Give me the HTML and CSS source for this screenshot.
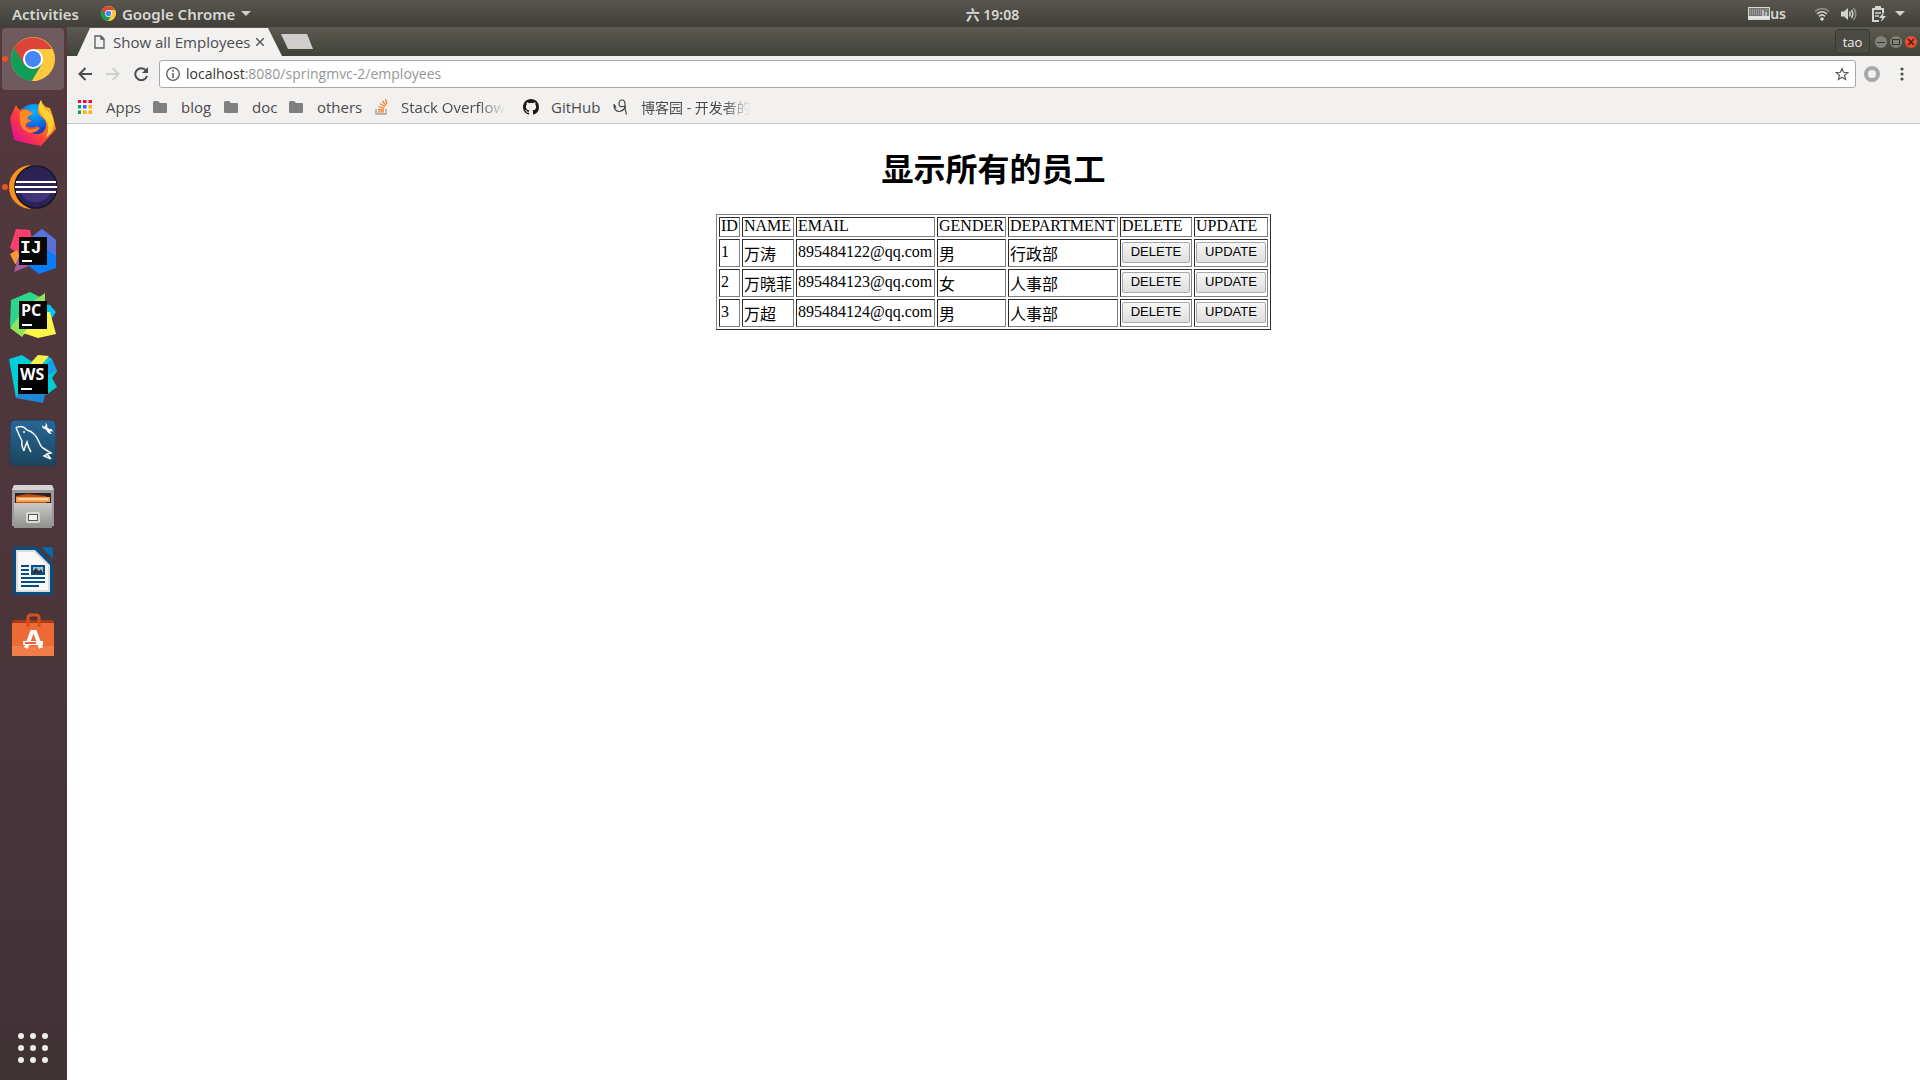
FILE: index.html
```html
<!DOCTYPE html>
<html lang="zh-CN">
<head>
<meta charset="utf-8">
<title>Show all Employees</title>
<link rel="stylesheet" href="styles.css">
</head>
<body>
<svg class="defs" width="0" height="0" aria-hidden="true">
  <symbol id="chrome" viewBox="0 0 44 44">
    <circle cx="22" cy="22" r="22" fill="#fdca3e"/>
    <path d="M3 11A22 22 0 0 0 21 44L31 27 22 22z" fill="#109d58"/>
    <path d="M3 11A22 22 0 0 1 41 12L22 12 13 27z" fill="#dc4437"/>
    <path d="M22 12H41A22 22 0 0 1 21 44L31 27z" fill="#fdca3e"/>
    <circle cx="22" cy="22" r="10" fill="#fff"/>
    <circle cx="22" cy="22" r="8" fill="#4486f4"/>
  </symbol>
  <symbol id="folder" viewBox="0 0 14 12">
    <path d="M0 1.500Q0 0 1.500 0H5L7 2H13Q14 2 14 3V11Q14 12 13 12H1Q0 12 0 11z" fill="#808080"/>
  </symbol>
</svg>

<header class="topbar">
  <div class="topbar-left">
    <button class="top-btn activities">Activities</button>
    <button class="top-btn app-menu"><svg width="15" height="15"><use href="#chrome"/></svg>Google Chrome<svg width="10" height="5" viewBox="0 0 10 5"><path d="M0 0H10L5 5z" fill="#d0d0cc"/></svg></button>
  </div>
  <time class="clock">六 19:08</time>
  <div class="tray">
    <span class="input-source"><svg width="22" height="13" viewBox="0 0 22 13"><rect x=".5" y=".5" width="21" height="12" fill="#777" stroke="#d8d8d4"/><path d="M2 3H14M2 5H14M2 7H14" stroke="#bbb" stroke-dasharray="1 1"/><path d="M1 10.500H21" stroke="#e4e4e4" stroke-width="3"/><path d="M15 3V9M18 5V9" stroke="#fff"/><path d="M17 2.500H20" stroke="#7db65c"/></svg>us</span>
    <svg class="wifi" width="16" height="14" viewBox="0 0 16 14" fill="none" stroke="#d4d4d0" stroke-width="1.600"><path d="M1 4.500Q8-1.500 15 4.500" opacity=".5"/><path d="M3 7Q8 2.500 13 7"/><path d="M5 9.300Q8 6.500 11 9.300"/><circle cx="8" cy="12" r="1.300" fill="#d4d4d0" stroke-width="1"/></svg>
    <svg class="volume" width="16" height="14" viewBox="0 0 16 14" fill="none" stroke="#d4d4d0" stroke-width="1.500"><path d="M0 4.500H3L7 1V13L3 9.500H0z" fill="#d4d4d0" stroke="none"/><path d="M8.500 4.500Q10 7 8.500 9.500M10.500 3Q13 7 10.500 11"/><path d="M12.500 1Q17 7 12.500 13" opacity=".5"/></svg>
    <svg class="battery" width="15" height="16" viewBox="0 0 15 16"><path d="M4 2V1H8V2" stroke="#d4d4d0" stroke-width="2" fill="none"/><path d="M11 7V3H1V15H7" stroke="#d4d4d0" stroke-width="2" fill="none"/><path d="M3 7H9M3 10H7" stroke="#d4d4d0" stroke-width="1.500"/><path d="M12 6 7 12H10L9 16 14 10H11z" fill="#d4d4d0"/></svg>
    <svg width="10" height="5" viewBox="0 0 10 5"><path d="M0 0H10L5 5z" fill="#d0d0cc"/></svg>
  </div>
</header>

<div class="desktop">
  <nav class="dock" aria-label="Dock">
    <a class="app active running" href="#" aria-label="Google Chrome"><svg width="44" height="44"><use href="#chrome"/></svg></a>
    <a class="app" href="#" aria-label="Firefox"><svg width="46" height="46" viewBox="0 0 46 46">
      <defs><linearGradient id="fx" x1="0" y1="1" x2="1" y2="0"><stop offset=".15" stop-color="#e3168a"/><stop offset=".4" stop-color="#ff3b3f"/><stop offset=".7" stop-color="#ff8a1c"/><stop offset="1" stop-color="#ffe23a"/></linearGradient><radialGradient id="fb" cx=".5" cy=".2" r=".8"><stop offset="0" stop-color="#08b6ff"/><stop offset=".6" stop-color="#0a5bd8"/><stop offset="1" stop-color="#26127a"/></radialGradient></defs>
      <circle cx="24" cy="22" r="18" fill="url(#fb)"/>
      <path d="M6 5 9 10Q15 8 18 10L23 13Q20 15 17 17 18 20 22 20 20 22 16 24 18 29 25 27 27 25 30 28 26 34 20 31 26 37 33 32 38 27 35 20 32 17 30 16 25 10 31 0 33 7 40 8 44 18 46 29 39 37 31 46 18 44 4 40 1 26 0 18 5 12z" fill="url(#fx)"/>
      <path d="M10 12Q15 9 18 11L23 14Q18 15 17 19L21 21Q16 22 15 26 17 31 24 29L29 28Q25 34 18 32 10 29 10 20z" fill="#ff8a26"/>
      <path d="M31 0Q32 7 38 11 46 18 43 29 40 35 36 37 41 27 35 19 25 10 31 0z" fill="#ffda35" opacity=".85"/>
    </svg></a>
    <a class="app running" href="#" aria-label="Eclipse"><svg width="48" height="46" viewBox="0 0 48 46">
      <path d="M22 1A22 22 0 0 0 22 45Q8 38 8 23 8 8 22 1z" fill="#f7941e"/><circle cx="27" cy="23" r="21" fill="#2c2255" stroke="#17152a" stroke-width="1.500"/><path d="M11 26Q14 38 27 38 39 38 43 26z" fill="#41337b"/><path d="M7 18H47M6 23H48M7 28H47" stroke="#fff" stroke-width="2"/>
    </svg></a>
    <a class="app" href="#" aria-label="IntelliJ IDEA"><svg width="46" height="46" viewBox="0 0 46 46">
      <path d="M6 1 20 2 24 20 12 28 0 20z" fill="#fe3d6e"/><path d="M0 26 7 22 12 32 5 36z" fill="#f79a31"/><path d="M4 44 8 29 24 36z" fill="#a65a9d"/><path d="M20 10 32 1 46 12V40L29 46 16 36z" fill="#087cfa"/><path d="M20 10 32 1 46 12V28z" fill="#5872d8"/><rect x="9" y="9" width="28" height="28" fill="#080808"/><path d="M12 33H22" stroke="#fff" stroke-width="2"/><text class="logo-text mono" x="10" y="25">IJ</text>
    </svg></a>
    <a class="app" href="#" aria-label="PyCharm"><svg width="46" height="46" viewBox="0 0 46 46">
      <path d="M1 8 20 0 32 6 25 36 10 40 0 34z" fill="#2bd68c"/><path d="M18 13 35 1V14L12 45 0 36z" fill="#8ee55a"/><path d="M33 12 40 13 46 20 37 33z" fill="#07c3f2"/><path d="M37 20H40L46 42 28 46 13 41z" fill="#fcf84a"/><rect x="9" y="9" width="28" height="28" fill="#080808"/><path d="M12 33H22" stroke="#fff" stroke-width="2"/><text class="logo-text" x="11" y="24">PC</text>
    </svg></a>
    <a class="app" href="#" aria-label="WebStorm"><svg width="48" height="48" viewBox="0 0 48 48">
      <path d="M0 4 13 0 25 8 36 38 7 43z" fill="#00cdd7"/><path d="M7 43 10 36 37 36 34 48z" fill="#2086d7"/><path d="M22 7 29 0 42 3 48 16 43 23 48 32 37 40z" fill="#00cdd7"/><path d="M21 9 29 0 40 1 27 16z" fill="#fff045"/><path d="M28 16 43 4 48 16 38 20z" fill="#159ee5"/><rect x="9" y="9" width="30" height="30"/><path d="M12 34H23" stroke="#fff" stroke-width="2"/><text class="logo-text" x="11" y="25">WS</text>
    </svg></a>
    <a class="app" href="#" aria-label="MySQL Workbench"><svg width="46" height="46" viewBox="0 0 46 46">
      <defs><linearGradient id="my" x2="0" y2="1"><stop stop-color="#286799"/><stop offset="1" stop-color="#1b455c"/></linearGradient></defs><rect width="46" height="46" rx="5" fill="url(#my)" stroke="#1b3d58"/>
      <path d="M8 7Q13 5 17 10 25 12 29 22 31 27 33 28L41 33 37 34 41 39M41 39 34 36 38 34M21 32Q18 27 17 22 14 29 14 31 11 25 12 21 9 15 7 10 5 7 8 7" fill="none" stroke="#f4f6f8" stroke-width="1.500"/><circle cx="14" cy="12" r="1" fill="#fff"/><path d="M35 3Q38 4 37 7L39 9Q42 8 43 12L41 11 40 12 42 14Q38 14 37 11L35 9Q32 9 32 5L34 7 36 5z" fill="#fff"/>
    </svg></a>
    <a class="app" href="#" aria-label="Files"><svg width="44" height="44" viewBox="0 0 44 44">
      <defs><linearGradient id="fl" x2="0" y2="1"><stop stop-color="#c9c9c7"/><stop offset="1" stop-color="#8f8f8d"/></linearGradient></defs><path d="M3 0H41L43 5V41H1V5z" fill="#9c989b"/><path d="M3 0H41L43 5H1z" fill="#d8d1d6"/><rect x="4" y="8" width="36" height="12" fill="#2b2422"/><path d="M5 11 17 9 35 11V18H5z" fill="#c24d18"/><rect x="5" y="12" width="34" height="5" fill="#f6a24c"/><path d="M7 14H37" stroke="#fff"/><path d="M3 18H41V43H3z" fill="url(#fl)"/><rect x="15" y="27" width="14" height="11" rx="2" fill="#d9d9d7"/><rect x="17.500" y="29.500" width="9" height="6" fill="#f2f2ef" stroke="#555"/>
    </svg></a>
    <a class="app" href="#" aria-label="LibreOffice Writer"><svg width="42" height="48" viewBox="0 0 42 48">
      <path d="M3 0H25L41 17V45Q41 48 38 48H3Q1 48 1 45V3Q1 0 3 0z" fill="#074f82"/><path d="M29 0H38Q41 0 41 3V12z" fill="#0369a3"/><path d="M4 3H23L38 18V45H4z" fill="#ddd"/><path d="M6 5H22L36 19V43H6z" fill="#f8f8f8"/><path d="M9 19H17M9 23H17M9 27H17M9 31H33M9 35H33M9 39H27" stroke="#074f82" stroke-width="2"/><rect x="20" y="19" width="12" height="8" fill="#8fc7e8" stroke="#074f82" stroke-width="2"/><path d="M21 26V24L24 21 27 24 29 22 31 26z" fill="#333"/><path d="M29 20H31V22z" fill="#f5c431"/>
    </svg></a>
    <a class="app" href="#" aria-label="Ubuntu Software"><svg width="42" height="44" viewBox="0 0 42 44">
      <path d="M1 7H41L42 11H0z" fill="#a63c12"/><path d="M0 10H42V43H0z" fill="#ee6a35"/><path d="M0 33H42V43H0z" fill="#f27d48"/><path d="M16 14V5Q16 2 19 2H24Q27 2 27 5V14" fill="none" stroke="#d6501e" stroke-width="3"/><path d="M14 35 20 19H23L29 35M11 30H31" fill="none" stroke="#fff" stroke-width="4"/><path d="M13 30H24" stroke="#ee6a35" stroke-width="2"/>
    </svg></a>
    <button class="app show-apps" aria-label="Show Applications"><svg width="30" height="30" viewBox="0 0 30 30" fill="#eeeeec"><circle cx="3" cy="3" r="3"/><circle cx="15" cy="3" r="3"/><circle cx="27" cy="3" r="3"/><circle cx="3" cy="15" r="3"/><circle cx="15" cy="15" r="3"/><circle cx="27" cy="15" r="3"/><circle cx="3" cy="27" r="3"/><circle cx="15" cy="27" r="3"/><circle cx="27" cy="27" r="3"/></svg></button>
  </nav>

  <div class="browser">
    <div class="tabstrip">
      <div class="tab">
        <svg width="11" height="14" viewBox="0 0 11 14"><path d="M1 1H7L10 4V13H1zM7 1V4H10" fill="none" stroke="#5a5a5a" stroke-width="1.300"/></svg>
        <span class="tab-title">Show all Employees</span>
        <button class="tab-close" aria-label="Close tab"><svg width="8" height="8" viewBox="0 0 8 8"><path d="M0 0 8 8M8 0 0 8" stroke="#5a5a5a" stroke-width="1.500"/></svg></button>
      </div>
      <button class="new-tab" aria-label="New tab"></button>
      <button class="profile">tao</button>
      <div class="window-controls">
        <button class="control" aria-label="Minimize"><svg width="12" height="12" viewBox="0 0 12 12"><path d="M2 6.500H10" stroke="#33332e"/></svg></button>
        <button class="control" aria-label="Maximize"><svg width="12" height="12" viewBox="0 0 12 12"><rect x="2.500" y="3.500" width="7" height="5" fill="none" stroke="#33332e"/></svg></button>
        <button class="control close" aria-label="Close"><svg width="12" height="12" viewBox="0 0 12 12"><path d="M3 3 9 9M9 3 3 9" stroke="#4c1608" stroke-width="1.500"/></svg></button>
      </div>
    </div>

    <div class="toolbar">
      <button class="tool" aria-label="Back"><svg width="14" height="14" viewBox="0 0 14 14"><path d="M14 7H1.500M7.500 1 1.500 7 7.500 13" fill="none" stroke="#4c4c4c" stroke-width="2"/></svg></button>
      <button class="tool" aria-label="Forward"><svg width="14" height="14" viewBox="0 0 14 14"><path d="M0 7H12.500M6.500 1 12.500 7 6.500 13" fill="none" stroke="#cfcfcd" stroke-width="2"/></svg></button>
      <button class="tool" aria-label="Reload"><svg width="14" height="14" viewBox="0 0 14 14"><path d="M12 3.500A6 6 0 1 0 13 9" fill="none" stroke="#4c4c4c" stroke-width="2"/><path d="M14 0V6H8z" fill="#4c4c4c"/></svg></button>
      <div class="omnibox">
        <svg width="14" height="14" viewBox="0 0 14 14"><circle cx="7" cy="7" r="6.300" fill="none" stroke="#5a5a5a" stroke-width="1.300"/><path d="M7 3V4.700M7 6V11" stroke="#5a5a5a" stroke-width="1.500"/></svg>
        <div class="address"><span class="host">localhost</span>:8080/springmvc-2/employees</div>
        <button class="star" aria-label="Bookmark this page"><svg width="14" height="14" viewBox="0 0 14 14"><path d="M7 1.500 8.600 5.300 12.800 5.600 9.600 8.300 10.600 12.400 7 10.200 3.400 12.400 4.400 8.300 1.200 5.600 5.400 5.300z" fill="none" stroke="#5a5a5a" stroke-width="1.200"/></svg></button>
      </div>
      <button class="extension" aria-label="Extension"><svg width="16" height="16" viewBox="0 0 16 16"><circle cx="8" cy="8" r="6" fill="none" stroke="#a8a8a8" stroke-width="4"/></svg></button>
      <button class="menu" aria-label="Menu"><svg width="4" height="14" viewBox="0 0 4 14" fill="#4c4c4c"><circle cx="2" cy="2" r="1.600"/><circle cx="2" cy="7" r="1.600"/><circle cx="2" cy="12" r="1.600"/></svg></button>
    </div>

    <nav class="bookmarks" aria-label="Bookmarks">
      <a class="bookmark" href="#"><svg width="14" height="14" viewBox="0 0 14 14"><path d="M0 0H4V4H0zM5 0H9V4H5zM10 0H14V4H10z" fill="#f03"/><path d="M0 5H4V9H0zM0 10H4V14H0z" fill="#00a45a"/><path d="M5 5H9V9H5z" fill="#3c65f5"/><path d="M10 5H14V9H10zM5 10H9V14H5zM10 10H14V14H10z" fill="#ffb000"/><path d="M4 0V14M9.500 0V14M0 4H14M0 9.500H14" stroke="#f2f1f0" stroke-width="2"/></svg><span>Apps</span></a>
      <a class="bookmark" href="#"><svg width="14" height="12"><use href="#folder"/></svg><span>blog</span></a>
      <a class="bookmark" href="#"><svg width="14" height="12"><use href="#folder"/></svg><span>doc</span></a>
      <a class="bookmark" href="#"><svg width="14" height="12"><use href="#folder"/></svg><span>others</span></a>
      <a class="bookmark site" href="#"><svg width="14" height="16" viewBox="0 0 14 16" fill="none"><path d="M1 10V15H11V10" stroke="#a0a0a0" stroke-width="1.300"/><path d="M3 12.800H9M3 10.500 9 11M3.500 7.500 9.300 9.300M5 4.500 10 7.800M7.500 2 11 6.500M10.500 0 12 5" stroke="#f48024" stroke-width="1.300"/></svg><span class="fading">Stack Overflow</span></a>
      <a class="bookmark" href="#"><svg width="16" height="16" viewBox="0 0 16 16"><path fill="#1b1817" d="M8 0C3.580 0 0 3.580 0 8c0 3.540 2.290 6.530 5.470 7.590.4.070.55-.17.55-.38v-1.490c-2.010.37-2.530-.49-2.690-.94-.09-.23-.48-.94-.82-1.130-.28-.15-.68-.52-.01-.53.63-.01 1.080.58 1.230.82.72 1.210 1.870.87 2.330.66.07-.52.28-.87.51-1.070-1.780-.2-3.640-.89-3.640-3.950 0-.87.31-1.590.82-2.150-.08-.2-.36-1.020.08-2.120 0 0 .67-.21 2.200.82a7.600 7.600 0 0 1 4 0c1.530-1.040 2.200-.82 2.200-.82.44 1.100.16 1.920.08 2.120.51.56.82 1.270.82 2.150 0 3.070-1.870 3.750-3.650 3.950.29.25.54.73.54 1.480v2.190c0 .21.15.46.55.38A8 8 0 0 0 16 8c0-4.420-3.580-8-8-8z"/></svg><span>GitHub</span></a>
      <a class="bookmark" href="#"><svg width="15" height="16" viewBox="0 0 15 16" fill="none" stroke="#444" stroke-width="1.200"><path d="M1 6Q1 12 6 12.500 11 12 12.500 7"/><path d="M12 7Q6 9 6 5 6 1 9 1 12 1 12 5 11.500 10 13.500 15.500"/><path d="M1 5 3 9"/></svg><span class="fading cn">博客园 - 开发者的</span></a>
    </nav>

    <main class="page">
      <h1>显示所有的员工</h1>
      <table class="employees">
        <colgroup><col class="c-id"><col class="c-name"><col class="c-email"><col class="c-gender"><col class="c-department"><col class="c-delete"><col class="c-update"></colgroup>
        <tbody>
        <tr class="head"><td>ID</td><td>NAME</td><td>EMAIL</td><td>GENDER</td><td>DEPARTMENT</td><td>DELETE</td><td>UPDATE</td></tr>
        <tr><td>1</td><td class="zh">万涛</td><td>895484122@qq.com</td><td class="zh">男</td><td class="zh">行政部</td><td class="act"><button class="action">DELETE</button></td><td class="act"><button class="action">UPDATE</button></td></tr>
        <tr><td>2</td><td class="zh">万晓菲</td><td>895484123@qq.com</td><td class="zh">女</td><td class="zh">人事部</td><td class="act"><button class="action">DELETE</button></td><td class="act"><button class="action">UPDATE</button></td></tr>
        <tr><td>3</td><td class="zh">万超</td><td>895484124@qq.com</td><td class="zh">男</td><td class="zh">人事部</td><td class="act"><button class="action">DELETE</button></td><td class="act"><button class="action">UPDATE</button></td></tr>
        </tbody>
      </table>
    </main>
  </div>
</div>
</body>
</html>
```
FILE: styles.css
```css
* { box-sizing: border-box; }

body {
  margin: 0;
  min-height: 100vh;
  display: flex;
  flex-direction: column;
  background: #fff;
  font-family: "Open Sans", "Noto Sans CJK SC", sans-serif;
  font-size: 15px;
}

button {
  margin: 0;
  padding: 0;
  border: 0;
  background: none;
  color: inherit;
  font: inherit;
}

a { color: inherit; text-decoration: none; }
svg { display: block; flex: none; }
.defs { position: absolute; }

/* System bar */
.topbar {
  display: grid;
  grid-template-columns: 1fr auto 1fr;
  align-items: center;
  height: 27px;
  padding: 0 15px 0 12px;
  background: linear-gradient(#59564f, #403f3a);
  color: #d8d8d3;
  font-family: "Noto Sans", "Noto Sans CJK SC", sans-serif;
  font-weight: 600;
}

.topbar-left { display: flex; gap: 22px; }
.top-btn { display: flex; align-items: center; gap: 6px; }
.clock { padding-left: 68px; font-size: 14px; }
.tray { display: flex; align-items: center; justify-content: flex-end; }
.input-source { display: flex; align-items: center; margin-right: 28px; font-size: 14px; }
.wifi { margin-right: 11px; }
.volume { margin-right: 15px; }
.battery { margin-right: 8px; }

.desktop { flex: 1; display: flex; }

/* Dock */
.dock {
  display: flex;
  flex-direction: column;
  flex: none;
  gap: 2px;
  width: 67px;
  padding: 1px 3px 1px 2px;
  background: linear-gradient(#54393d, #4a353b 60%, #44333a 88%, #3e3233);
}

.app {
  position: relative;
  display: flex;
  align-items: center;
  justify-content: center;
  height: 62px;
  border-radius: 4px;
}

.app.active { background: #6f5a5e; }

.app.running::before {
  content: "";
  position: absolute;
  left: 0;
  width: 6px;
  height: 6px;
  border-radius: 50%;
  background: #e95420;
}

.show-apps { margin-top: auto; }
.logo-text { fill: #fff; font: 700 16px "Open Sans", sans-serif; }
.logo-text.mono { font: 700 18px "Liberation Mono", monospace; }

/* Browser window */
.browser { flex: 1; min-width: 0; display: flex; flex-direction: column; }

.tabstrip {
  display: flex;
  align-items: center;
  height: 29px;
  padding: 0 3px 0 10px;
  background: linear-gradient(#5b5a50, #41423b);
}

.tab {
  display: flex;
  align-items: center;
  align-self: flex-end;
  width: 205px;
  height: 28px;
  padding: 0 18px 0 17px;
  background: #f2f1f0;
  color: #4b4b4b;
  line-height: 26px;
  clip-path: polygon(0 100%, 13px 0, 191px 0, 100% 100%);
}

.tab-title { flex: 1; margin-left: 8px; white-space: nowrap; }

.new-tab {
  width: 32px;
  height: 15px;
  margin-left: -1px;
  background: #cfcecc;
  clip-path: polygon(0 0, 26px 0, 100% 100%, 7px 100%);
}

.profile {
  width: 35px;
  height: 25px;
  margin-left: auto;
  border: 1px solid #38392f;
  border-radius: 4px;
  background: #4b4b43;
  color: #f0f0ec;
  font-size: 13px;
}

.window-controls { display: flex; gap: 3px; margin-left: 5px; }
.control { width: 12px; height: 12px; border-radius: 50%; background: #82827a; }
.control.close { background: #ee4f30; }

.toolbar {
  display: flex;
  align-items: center;
  height: 36px;
  padding: 0 16px 0 11px;
  background: #f2f1f0;
}

.tool { width: 14px; margin-right: 14px; }

.omnibox {
  display: flex;
  align-items: center;
  flex: 1;
  height: 28px;
  margin-left: -3px;
  padding: 0 6px;
  border: 1px solid #a8a8a8;
  border-radius: 3px;
  background: #fff;
}

.address {
  flex: 1;
  margin-left: 6px;
  padding-bottom: 2px;
  color: #969696;
  font-size: 14px;
  white-space: nowrap;
}

.host { color: #333; }
.extension { margin: 0 20px 0 8px; }

.bookmarks {
  display: grid;
  grid-template-columns: 75px 71px 65px 86px 148px 90px auto;
  justify-content: start;
  align-items: center;
  height: 32px;
  padding: 0 0 2px 11px;
  border-bottom: 1px solid #c8c8c6;
  background: #f2f1f0;
  color: #4b4b4b;
}

.bookmark { display: grid; grid-template-columns: 28px auto; align-items: center; justify-content: start; }
.bookmark.site { grid-template-columns: 26px auto; }
.fading { white-space: nowrap; mask-image: linear-gradient(90deg, #000 75%, transparent); }
.cn { font-size: 14px; }

/* Document */
.page {
  flex: 1;
  background: #fff;
  color: #000;
  font-family: "Liberation Serif", "Noto Sans CJK SC", serif;
  font-size: 16px;
}

h1 { margin: 22px 0 20px; font-size: 32px; line-height: 48px; text-align: center; }

.employees {
  width: 555px;
  margin: 0 auto;
  border: 1px solid;
  border-color: #808080 #2c2c2c #2c2c2c #808080;
  border-spacing: 2px;
  table-layout: fixed;
  line-height: 14px;
  white-space: nowrap;
}

.c-id { width: 21px; }
.c-name { width: 52px; }
.c-email { width: 139px; }
.c-gender { width: 69px; }
.c-department { width: 110px; }
.c-delete { width: 72px; }
.c-update { width: 74px; }

.employees td {
  height: 28px;
  padding: 5px 1px 1px;
  border: 1px solid;
  border-color: #2c2c2c #808080 #808080 #2c2c2c;
  vertical-align: top;
}

.employees .head td { height: 20px; padding-top: 1px; }
.employees .zh { padding-top: 8px; }
.employees .act { padding-top: 2px; }

.action {
  display: block;
  width: 100%;
  height: 21px;
  padding-bottom: 2px;
  border: 1px solid #a9a9a9;
  border-radius: 2px;
  background: linear-gradient(#f6f6f6, #dedede);
  font: 13px "Liberation Sans", sans-serif;
}
```
